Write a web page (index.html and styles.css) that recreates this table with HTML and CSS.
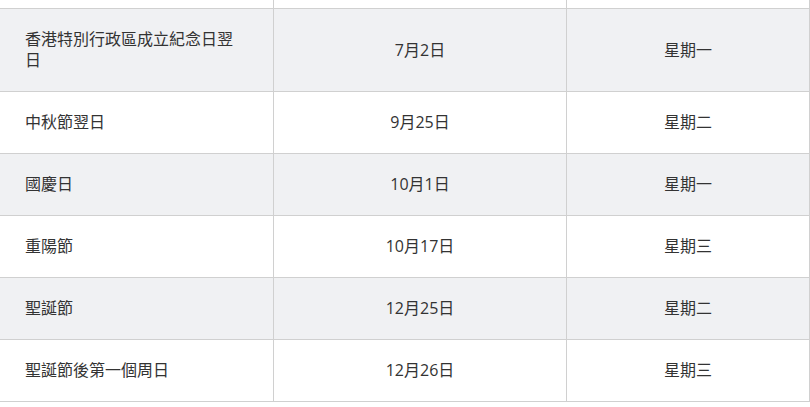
FILE: index.html
```html
<!DOCTYPE html>
<html lang="zh-Hant">
<head>
<meta charset="utf-8">
<title>公眾假期</title>
<link rel="stylesheet" href="styles.css">
</head>
<body>
<table class="holidays">
  <colgroup>
    <col class="c1">
    <col class="c2">
    <col class="c3">
  </colgroup>
  <tbody>
    <tr class="odd spacer"><td></td><td></td><td></td></tr>
    <tr class="even"><td>香港特別行政區成立紀念日翌日</td><td class="mid">7月2日</td><td class="mid">星期一</td></tr>
    <tr class="odd"><td>中秋節翌日</td><td class="mid">9月25日</td><td class="mid">星期二</td></tr>
    <tr class="even"><td>國慶日</td><td class="mid">10月1日</td><td class="mid">星期一</td></tr>
    <tr class="odd"><td>重陽節</td><td class="mid">10月17日</td><td class="mid">星期三</td></tr>
    <tr class="even"><td>聖誕節</td><td class="mid">12月25日</td><td class="mid">星期二</td></tr>
    <tr class="odd"><td>聖誕節後第一個周日</td><td class="mid">12月26日</td><td class="mid">星期三</td></tr>
  </tbody>
</table>
</body>
</html>
```

FILE: styles.css
```css
html, body {
  margin: 0;
  padding: 0;
  background: #ffffff;
}

body {
  font-family: "Open Sans", "Noto Sans CJK TC", sans-serif;
  font-size: 16px;
  color: #333333;
  overflow: hidden;
}

.holidays {
  border-collapse: collapse;
  table-layout: fixed;
  width: 810px;
  margin: -54px 0 0 -1px;
}

.c1 { width: 274px; }
.c2 { width: 293px; }
.c3 { width: 243px; }

.holidays td {
  border: 1px solid #d0d0d0;
  padding: 20px 25px;
  line-height: 21px;
  vertical-align: middle;
  text-align: left;
}

.holidays tr.spacer td {
  padding: 0;
  height: 61px;
}

.holidays td.mid {
  text-align: center;
}

.holidays tr.even td {
  background: #f0f1f3;
}

.holidays tr.odd td {
  background: #ffffff;
}
```
